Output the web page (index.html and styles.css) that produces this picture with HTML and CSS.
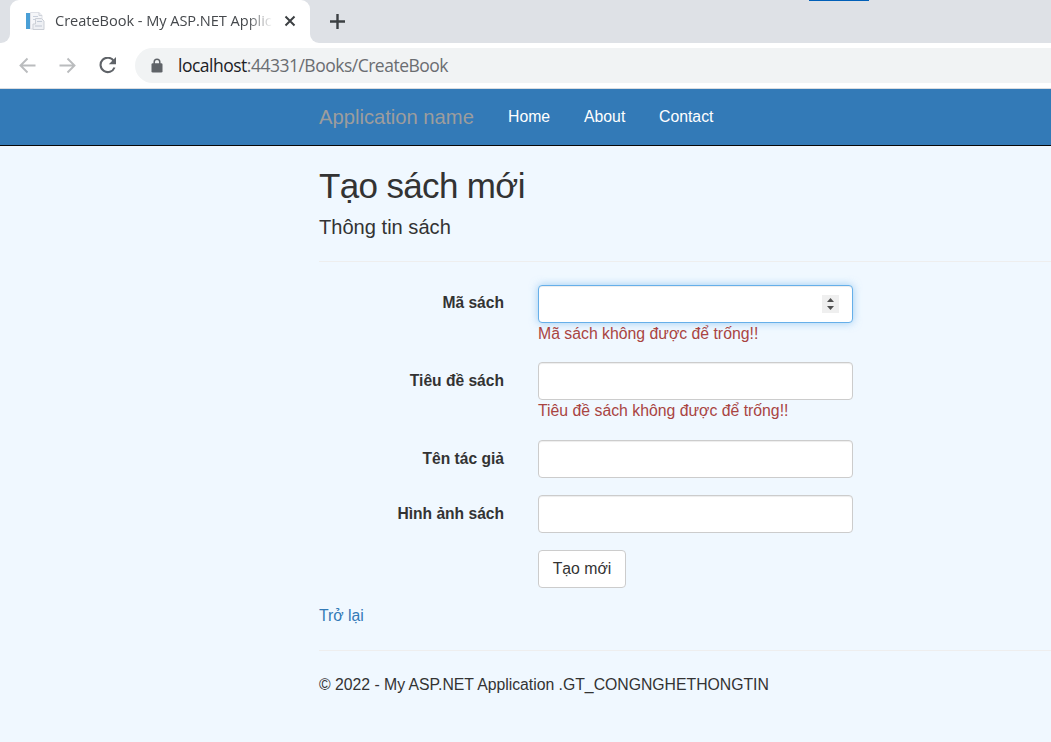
FILE: index.html
```html
<!DOCTYPE html>
<html lang="vi">
<head>
<meta charset="utf-8">
<title>CreateBook - My ASP.NET Application</title>
<link rel="stylesheet" href="styles.css">
</head>
<body>
<header class="browser">
  <div class="tabstrip">
    <div class="edge edge-left"></div>
    <div class="tab">
      <svg class="favicon" width="20" height="20" viewBox="0 0 20 20">
        <rect x="1" y="2" width="4" height="16" fill="#4a9fd6"/>
        <path d="M5.500 1.500h8.500l3 3v13.500h-11.500z" fill="#f5f6f9" stroke="#dfe1e7"/>
        <path d="M14 1.500v3h3" fill="none" stroke="#cfd3da"/>
        <path d="M8 5.500h5M8 8.500h2" stroke="#c9d0dc"/>
        <path d="M10.500 7.500h6l2.500 2.500v8.500h-11v-5.500h2.500z" fill="#eef0f4" stroke="#cbcfd6"/>
        <path d="M12 10.500h5" stroke="#c2cad6"/><path d="M10 15h7" stroke="#cfd5de" stroke-width="1.500"/>
      </svg>
      <span class="tab-title">CreateBook - My ASP.NET Applic</span>
      <svg class="close" width="12" height="12" viewBox="0 0 12 12"><path d="M1.500 1.500l9 9M10.500 1.500l-9 9" stroke="#3c4043" stroke-width="2"/></svg>
    </div>
    <div class="edge edge-right"></div>
    <svg class="plus" width="16" height="16" viewBox="0 0 16 16"><path d="M8.500 1v15M1 8.500h15" stroke="#3c4043" stroke-width="2.400"/></svg>
    <div class="accent"></div>
  </div>
  <div class="toolbar">
    <svg class="arrow" width="18" height="18" viewBox="0 0 18 18"><path d="M16.500 8.500H2M8.500 1.500l-7 7 7 7" fill="none" stroke="#babcbe" stroke-width="1.900"/></svg>
    <svg class="arrow" width="18" height="18" viewBox="0 0 18 18"><path d="M.5 8.500H15M8.500 1.500l7 7-7 7" fill="none" stroke="#babcbe" stroke-width="1.900"/></svg>
    <svg class="reload" width="18" height="18" viewBox="0 0 18 18"><path d="M14.800 4A7.200 7.200 0 1 0 15.500 10.500" fill="none" stroke="#5f6368" stroke-width="2.100"/><path d="M17 0v7.200H9.800z" fill="#5f6368"/></svg>
    <div class="address">
      <svg class="lock" width="12" height="15" viewBox="0 0 12 15"><path d="M3.200 6V4a2.800 2.800 0 0 1 5.600 0v2" fill="none" stroke="#5f6368" stroke-width="1.500"/><rect x=".5" y="5.300" width="11" height="9.200" rx="1.300" fill="#5f6368"/></svg>
      <span class="url"><b>localhost</b>:44331/Books/CreateBook</span>
    </div>
  </div>
</header>
<nav class="navbar">
  <a class="brand">Application name</a>
  <a class="nav-home">Home</a>
  <a class="nav-about">About</a>
  <a class="nav-contact">Contact</a>
</nav>
<main class="content">
  <h2>Tạo sách mới</h2>
  <h4>Thông tin sách</h4>
  <hr>
  <form class="form">
    <label>Mã sách</label>
    <div class="field has-error">
      <div class="control focused">
        <svg class="spinner" width="17" height="18" viewBox="0 0 17 18"><path d="M0 0h17v18H0z" fill="#efefef"/><path d="M5 7l3.500-4L12 7zM5 11h7l-3.500 4z" fill="#505050"/></svg>
      </div>
      <span class="error">Mã sách không được để trống!!</span>
    </div>
    <label class="lower">Tiêu đề sách</label>
    <div class="field has-error second">
      <div class="control"></div>
      <span class="error">Tiêu đề sách không được để trống!!</span>
    </div>
    <label class="lower">Tên tác giả</label>
    <div class="field"><div class="control"></div></div>
    <label class="lower">Hình ảnh sách</label>
    <div class="field"><div class="control"></div></div>
    <span></span>
    <button type="button" class="btn">Tạo mới</button>
  </form>
  <a class="back">Trở lại</a>
  <hr class="footer-line">
  <footer>© 2022 - My ASP.NET Application .GT_CONGNGHETHONGTIN</footer>
</main>
</body>
</html>
```
FILE: styles.css
```css
* { box-sizing: border-box; }
body {
  margin: 0;
  height: 742px;
  overflow: hidden;
  background: #f0f8ff;
  color: #333;
  font: 15.8px/22px "Liberation Sans", Arial, sans-serif;
}
.browser { height: 89px; background: #fff; border-bottom: 1px solid #dadce0; }
.tabstrip { position: relative; display: flex; height: 43px; background: #dee1e6; }
.edge { width: 10px; background: #fff; }
.edge::before { content: ""; display: block; height: 43px; background: #dee1e6; }
.edge-left::before { border-bottom-right-radius: 9px; }
.edge-right::before { border-bottom-left-radius: 9px; }
.tab {
  display: flex;
  align-items: center;
  width: 300px;
  padding: 0 14px 1px 15px;
  background: #fff;
  border-radius: 9px 9px 0 0;
}
.favicon { flex: none; }
.tab-title {
  width: 218px;
  margin-left: 10px;
  padding-bottom: 2px;
  white-space: nowrap;
  color: #45484c;
  font: 14.6px/20px "Open Sans", sans-serif;
  letter-spacing: -0.05px;
  -webkit-mask-image: linear-gradient(to right, #000 88%, transparent);
  mask-image: linear-gradient(to right, #000 88%, transparent);
}
.close { flex: none; margin-left: 11px; }
.plus { margin: 13px 0 0 9px; }
.accent { position: absolute; top: 0; left: 809px; width: 60px; height: 1px; background: #005fb8; }
.toolbar { display: flex; align-items: center; height: 45px; padding-left: 19px; }
.arrow { flex: none; margin-right: 22px; }
.reload { flex: none; margin-right: 18px; }
.address {
  display: flex;
  align-items: center;
  flex: 1;
  height: 35px;
  padding-left: 16px;
  background: #f1f3f4;
  border-radius: 18px 0 0 18px;
}
.lock { flex: none; margin-right: 15px; }
.url {
  padding-bottom: 2px;
  color: #6a6d71;
  font: 17.5px/24px "Open Sans", sans-serif;
  letter-spacing: -0.5px;
  white-space: nowrap;
}
.url b { color: #202124; font-weight: 400; }
.navbar {
  display: flex;
  align-items: center;
  height: 57px;
  padding-left: 319px;
  background: #337ab7;
  border-bottom: 1px solid #080808;
  color: #fff;
}
.brand { width: 189px; color: #9d9d9d; font-size: 20.2px; }
.nav-home { width: 76px; }
.nav-about { width: 75px; }
.content { padding: 20px 0 0 319px; }
h2, h4 { margin: 0; font-weight: 400; }
h2 { height: 40px; font-size: 35px; line-height: 40px; letter-spacing: -0.65px; }
h4 { height: 22px; margin-top: 10px; font-size: 20.1px; }
hr { height: 1px; margin: 23px 0; border: 0; background: #eee; }
.form { display: grid; grid-template-columns: 185px 315px; column-gap: 34px; row-gap: 17px; }
label { padding-top: 7px; font-size: 15.6px; font-weight: 700; text-align: right; line-height: 22px; }
.lower { padding-top: 8px; }
.has-error { height: 60px; }
.second { height: 61px; }
.control {
  display: flex;
  align-items: center;
  justify-content: flex-end;
  height: 38px;
  padding-right: 13px;
  background: #fff;
  border: 1px solid #ccc;
  border-radius: 4px;
  box-shadow: inset 0 1px 1px rgba(0, 0, 0, .075);
}
.focused { border-color: #66afe9; box-shadow: inset 0 1px 1px rgba(0, 0, 0, .075), 0 0 9px rgba(102, 175, 233, .6); }
.error { display: block; color: #a94442; white-space: nowrap; }
.btn {
  width: 88px;
  height: 38px;
  padding: 0;
  border: 1px solid #ccc;
  border-radius: 4px;
  background: #fff;
  color: #333;
  font: inherit;
}
.back { display: block; margin-top: 17px; color: #337ab7; }
.footer-line { margin: 23px 0; }
footer { white-space: nowrap; letter-spacing: -0.02px; }
```
